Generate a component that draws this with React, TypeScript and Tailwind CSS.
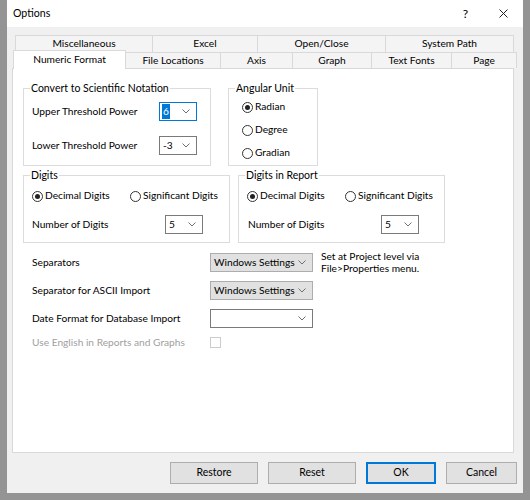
import clsx from "clsx";

const ui = "font-['Lato','Noto_Sans',sans-serif]";

function Chevron() {
  return (
    <svg width="8" height="5" viewBox="0 0 8 5" className="shrink-0">
      <path d="M0.5 0.5 L4 4 L7.5 0.5" fill="none" stroke="#707070" strokeWidth="1" />
    </svg>
  );
}

function Combo({
  value,
  className,
  gray,
  focused,
}: {
  value?: string;
  className?: string;
  gray?: boolean;
  focused?: boolean;
}) {
  return (
    <div
      className={clsx(
        "flex h-[19px] items-center justify-between whitespace-nowrap border pl-[2px] pr-[6px]",
        gray ? "border-[#adadad] bg-[#e1e1e1]" : "border-[#7a7a7a] bg-white",
        focused && "!border-[#0078d7]",
        className
      )}
    >
      {focused ? (
        <span className="flex h-[15px] items-center bg-[#0078d7] px-px text-white">{value}</span>
      ) : (
        <span className="pl-px">{value}</span>
      )}
      <Chevron />
    </div>
  );
}

function Radio({ checked, label, className }: { checked?: boolean; label: string; className?: string }) {
  return (
    <div className={clsx("flex h-[16px] items-center gap-[2px] whitespace-nowrap", className)}>
      <span className="flex size-[11px] items-center justify-center rounded-full border border-[#333] bg-white">
        {checked && <span className="size-[5px] rounded-full bg-[#222]" />}
      </span>
      <span>{label}</span>
    </div>
  );
}

function Group({
  title,
  className,
  children,
}: {
  title: string;
  className?: string;
  children: React.ReactNode;
}) {
  return (
    <fieldset className={clsx("border border-[#dcdcdc]", className)}>
      <legend className="ml-[6px] whitespace-nowrap px-px text-[10.5px] leading-[16px]">{title}</legend>
      {children}
    </fieldset>
  );
}

const backTabs = [
  { label: "Miscellaneous", w: "w-[138px]" },
  { label: "Excel", w: "w-[105px]" },
  { label: "Open/Close", w: "w-[128px]" },
  { label: "System Path", w: "w-[128px]" },
];

const frontTabs = [
  { label: "File Locations", w: "w-[95px]" },
  { label: "Axis", w: "w-[72px]" },
  { label: "Graph", w: "w-[79px]" },
  { label: "Text Fonts", w: "w-[80px]" },
  { label: "Page", w: "w-[65px]" },
];

export default function App() {
  return (
    <div className={clsx("h-[500px] w-[530px] bg-[#949494] pl-[7px] text-[10.2px] text-black", ui)}>
      <div className="flex h-[493px] w-[516px] flex-col whitespace-nowrap bg-[#f0f0f0]">
        {/* Title bar */}
        <div className="flex h-[27px] items-center bg-white pl-[6px]">
          <span className="flex-1 text-[10.6px]">Options</span>
          <span className="mr-[31px] text-[12px]">?</span>
          <svg width="9" height="9" viewBox="0 0 9 9" className="mr-[15px]">
            <path d="M0.5 0.5 L8.5 8.5 M8.5 0.5 L0.5 8.5" stroke="#222" strokeWidth="1" />
          </svg>
        </div>

        {/* Tabs */}
        <div className="pl-[5px] pt-[8px]">
          <div className="ml-[3px] flex">
            {backTabs.map((t) => (
              <div
                key={t.label}
                className={clsx(
                  "flex h-[17px] items-center justify-center border-t border-r border-[#d9d9d9] bg-[#f4f4f4] first:border-l",
                  t.w
                )}
              >
                {t.label}
              </div>
            ))}
          </div>
          <div className="ml-[1px] flex items-start">
            <div className="relative z-10 -mt-[2px] -mb-px flex h-[19px] w-[113px] items-start justify-center border-x border-t border-[#d9d9d9] bg-white pt-px">
              Numeric Format
            </div>
            {frontTabs.map((t) => (
              <div
                key={t.label}
                className={clsx(
                  "flex h-[16px] items-center justify-center border-t border-r border-[#d9d9d9] bg-[#f4f4f4]",
                  t.w
                )}
              >
                {t.label}
              </div>
            ))}
          </div>

          {/* Panel */}
          <div className="h-[385px] w-[502px] border border-[#d9d9d9] bg-white pl-[10px] pt-[11px]">
            <div className="flex gap-[17px]">
              <Group title="Convert to Scientific Notation" className="h-[86px] w-[188px]">
                <div className="grid grid-cols-[127px_38px] items-center gap-y-[15px] pl-[8px] pt-[6px]">
                  <span>Upper Threshold Power</span>
                  <Combo value="6" focused />
                  <span>Lower Threshold Power</span>
                  <Combo value="-3" />
                </div>
              </Group>
              <Group title="Angular Unit" className="h-[86px] w-[90px]">
                <div className="flex flex-col gap-[7px] pl-[13px] pt-[3px]">
                  <Radio checked label="Radian" />
                  <Radio label="Degree" />
                  <Radio label="Gradian" />
                </div>
              </Group>
            </div>

            <div className="mt-px flex gap-[8px]">
              <Group title="Digits" className="h-[76px] w-[207px]">
                <div className="flex flex-col gap-[11px] pl-[8px] pt-[5px]">
                  <div className="flex">
                    <Radio checked label="Decimal Digits" className="w-[98px]" />
                    <Radio label="Significant Digits" />
                  </div>
                  <div className="grid grid-cols-[133px_38px] items-center">
                    <span>Number of Digits</span>
                    <Combo value="5" />
                  </div>
                </div>
              </Group>
              <Group title="Digits in Report" className="h-[76px] w-[207px]">
                <div className="flex flex-col gap-[11px] pl-[8px] pt-[5px]">
                  <div className="flex">
                    <Radio checked label="Decimal Digits" className="w-[98px]" />
                    <Radio label="Significant Digits" />
                  </div>
                  <div className="grid grid-cols-[133px_38px] items-center pl-px">
                    <span>Number of Digits</span>
                    <Combo value="5" />
                  </div>
                </div>
              </Group>
            </div>

            <div className="ml-[9px] mt-[10px] grid grid-cols-[178px_103px_auto] items-center gap-y-[9px]">
              <span>Separators</span>
              <Combo value="Windows Settings" gray />
              <div className="row-span-2 -mt-[3px] self-start pl-[8px] leading-[12px]">
                Set at Project level via
                <br />
                File&gt;Properties menu.
              </div>
              <span>Separator for ASCII Import</span>
              <Combo value="Windows Settings" gray />
              <span>Date Format for Database Import</span>
              <Combo />
              <span />
              <span className="-mt-[2px] text-[#a0a0a0]">Use English in Reports and Graphs</span>
              <span className="-mt-[2px] size-[11px] border border-[#cccccc] bg-white" />
              <span />
            </div>
          </div>
        </div>

        {/* Buttons */}
        <div className="flex justify-end gap-[10px] pr-[6px] pt-[9px]">
          {[
            { label: "Restore", w: "w-[88px]" },
            { label: "Reset", w: "w-[88px]" },
            { label: "OK", w: "w-[70px]", def: true },
            { label: "Cancel", w: "w-[71px]" },
          ].map((b) => (
            <div
              key={b.label}
              className={clsx(
                "flex h-[22px] items-center justify-center bg-[#e1e1e1] text-[10.5px]",
                b.w,
                b.def ? "border-2 border-[#0078d7]" : "border border-[#adadad]"
              )}
            >
              {b.label}
            </div>
          ))}
        </div>
      </div>
    </div>
  );
}
